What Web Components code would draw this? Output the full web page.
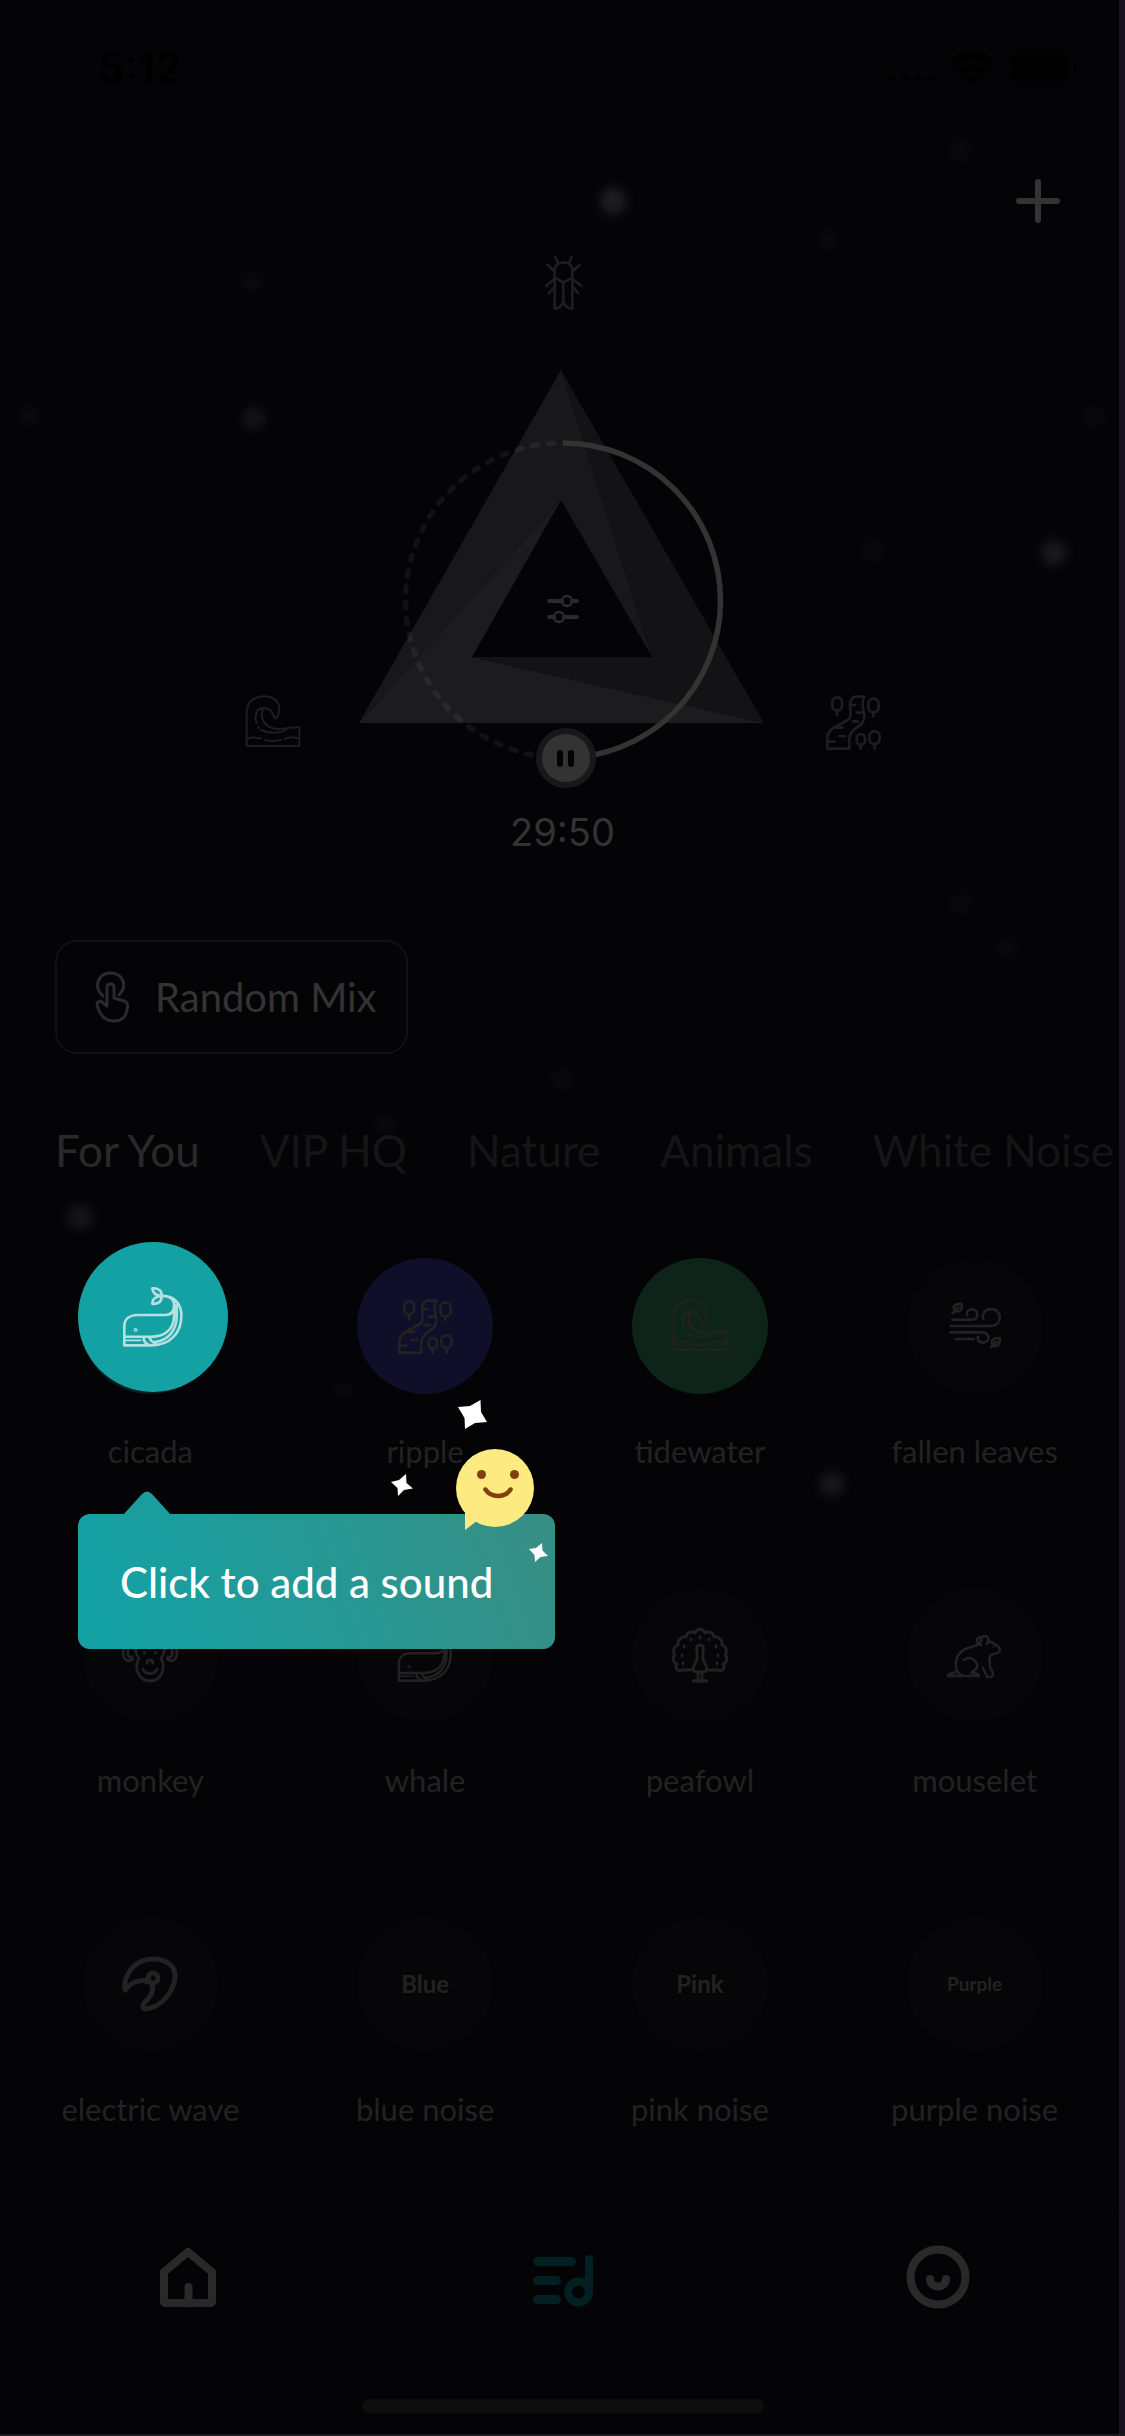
<!DOCTYPE html>
<html lang="en">
<head>
<meta charset="utf-8">
<meta name="viewport" content="width=device-width, initial-scale=1">
<title>Sound Mixer</title>
<style>
  html, body { margin: 0; min-height: 100%; background: #040406; }
  body { font-family: Lato, "Open Sans", sans-serif; color: #333334; }
</style>
</head>
<body>
<mix-app></mix-app>
<script>
const ICONS = {
  plus: ['0 0 44 44', 6, '<path d="M22 3v38M3 22h38"/>'],
  cicada: ['37 39 180 180', 8, '<path d="M102 112V90C102 60 155 60 155 90V112L128 128ZM102 112V206C118 206 128 192 128 180V128M155 112V206C139 206 128 192 128 180M112 69L104 50M145 69L153 50M102 95L80 74M155 95L177 74M100 118L76 138M157 118L182 138M100 142L84 160M158 142L173 160"/>'],
  tide: ['66 66 180 180', 6, '<path d="M77 228V128C77 96 100 79 130 79C160 79 176 98 175 118C174 134 167 146 162 145C156 141 156 115 130 114C108 113 103 132 104 150L107 160M112 170l2 4M130 114C117 126 121 154 140 168C170 187 200 169 235 172V228H77M120 180C140 190 175 192 197 178M77 206c8 0 12-4 20-4s12 4 24 3M133 210c8 0 12 3 22 3s14-3 24-3M190 206c8 0 12-4 20-4s12 3 25 3"/>'],
  ripple: ['69 66 180 180', 8, '<path d="M82 236V205C82 162 152 162 152 136L150 105C150 92 158 80 166 80H193C185 95 188 110 190 122C196 142 193 158 177 168C158 180 148 190 148 208V236ZM152 105h13M170 128h14M158 154h16M101 173h27M118 198h17M84 215h20M111 120v15M220 126v13M182 222v15M224 222v15"/><rect x="97" y="82" width="29" height="39" rx="14"/><rect x="205" y="86" width="31" height="41" rx="15"/><rect x="170" y="192" width="25" height="32" rx="12"/><rect x="208" y="184" width="31" height="38" rx="15"/>'],
  whale: ['180 200 200 200', 8, '<path d="M193 384V328C193 306 210 294 235 294H318C336 294 344 282 344 264C344 246 332 236 309 236C350 236 366 266 366 296C366 350 330 385 276 386H193M193 360H252C250 376 262 385 276 386M254 360H268C272 370 276 378 288 379M268 360C316 362 344 338 344 294V262M284 376C326 372 352 340 352 296V262"/><path d="M197 371H243" stroke-width="5"/><path d="M278 213C298 212 308 222 306 235C290 236 280 228 278 213ZM278 260C278 245 290 237 306 237C308 253 296 261 278 260Z"/><circle cx="227" cy="339" r="2"/>'],
  wind: ['1028 228 180 180', 8, '<path d="M1050 299H1110C1131 299 1130 268 1108 268C1095 268 1090 278 1095 286M1045 318H1165C1201 318 1202 267 1165 267C1147 267 1138 284 1143 297M1045 337h22M1073 337H1140C1165 337 1163 368 1142 368C1130 368 1124 358 1127 350M1061 357h14M1083 357h31M1051 280L1058 272C1048 258 1060 250 1078 252C1081 270 1070 279 1058 272L1068 262M1166 382L1172 376C1163 362 1174 352 1192 355C1195 372 1184 382 1172 376L1182 366"/>'],
  monkey: ['0 0 60 60', 2.8, '<path d="M13 34C6 39 1 32 4 23C7 15 13 17 14 21M47 34C54 39 59 32 56 23C53 15 47 17 46 21M12 32C8 33 7 29 8 25M48 32C52 33 53 29 52 25M14 24C14 0 46 0 46 24M19 33C12 24 18 17 24 20C28 22 28 23 30 23C32 23 32 22 36 20C42 17 48 24 41 33M19 33C13 45 20 56 30 56C40 56 47 45 41 33M23 44C25 50 35 50 37 44M27 38C27 34 33 34 33 38M24 28h1M35 28h1"/>'],
  peafowl: ['0 0 60 60', 2.8, '<path d="M23 45H12C7 47 4 42 7 39C2 37 2 32 5 30C2 26 4 21 8 20C7 15 12 11 16 12C17 7 22 6 25 8C27 3 33 3 35 8C38 6 43 7 44 12C48 11 53 15 52 20C56 21 58 26 55 30C58 32 58 37 53 39C56 42 53 47 48 45H37M30 20C33 20 34 23 33 27V34C34 38 37 40 37 45C34 48 26 48 23 45C23 40 26 38 27 34V27C26 23 27 20 30 20ZM28 47v8M32 47v8M23 56h14"/><path d="M30 12v1M21 14v1M39 14v1M14 21v1M46 21v1M12 30v1M48 30v1M13 38v1M47 38v1"/>'],
  mouse: ['0 0 60 60', 2.5, '<path d="M34 51H15M20 51C8 50 9 33 16 27C22 21 29 23 34 19C38 16 35 13 37 12C43 9 45 15 42 19M36 20C31 19 31 13 35 12M43 16C49 17 55 22 55 25C54 29 48 29 46 30C43 33 45 37 45 43C47 45 50 51 46 52H42L38 43M19 35C25 30 33 36 32 42C31 46 26 47 26 48C28 48 34 48 34 51M12 45C12 49 3 47 3 51H17"/><circle cx="49" cy="21" r=".4"/>'],
  swirl: ['0 0 60 60', 5, '<path d="M5 36C3 22 14 5 33 5C48 5 56 13 55 24C53 39 41 53 26 55C22 55 22 51 25 48C31 42 34 37 32 30C29 25 14 24 5 36ZM27 28L29 21"/><circle cx="33" cy="24" r="5"/>'],
  tap: ['0 0 34 52', 3, '<path d="M8 25C-2 16 3 2 15.500 2C28 2 33 15 24 24M12 35V16C12 12 19 12 19 16V27L29 30C33 31 33 35 32 39C31 46 26 50 19 50C9 50 4 42 2 34C2 30 6 29 8 32L12 35Z"/>'],
  sliders: ['0 0 40 40', 4, '<path d="M6 12h13M29 12h5M6 28h5M21 28h13"/><g stroke-width="2.500"><circle cx="24" cy="12" r="5"/><circle cx="16" cy="28" r="5"/></g>'],
  home: ['0 0 64 64', 8, '<path d="M8 56V27L32 7L56 27V56Q56 58 53 58H11Q8 58 8 56Z"/><path d="M32.500 42v14"/>'],
  music: ['0 0 64 64', 9, '<path d="M6.500 16.500h34M6.500 35.500h19M6.500 54.500h19"/><path d="M58 14V45" stroke-width="8"/><circle cx="47.500" cy="47" r="10.500" stroke-width="8"/>'],
  face: ['0 0 64 64', 8, '<circle cx="32" cy="32" r="27.500"/><path d="M24 34C24 44 40 44 40 34"/>'],
  signal: ['0 0 190 34', 0, '<g fill="currentColor"><circle cx="4" cy="27" r="3.500"/><circle cx="17" cy="27" r="3.500"/><circle cx="30" cy="27" r="3.500"/><circle cx="43" cy="27" r="3.500"/><path d="M62 10C75-2 93-2 106 10L101 16C91 7 77 7 67 16ZM70 19C79 11 89 11 98 19L93 24C87 19 81 19 75 24ZM78 27C82 23 86 23 90 27L84 33Z"/><rect x="123" y="4" width="56" height="26" rx="7"/><path d="M186 12q4 5 0 10z"/></g><rect x="120" y="1" width="62" height="32" rx="10" stroke="#020203" stroke-width="2"/>']
};

class Base extends HTMLElement {
  connectedCallback() {
    if (!this.shadowRoot) this.attachShadow({ mode: 'open' }).innerHTML = this.view();
  }
}

class MixIcon extends Base {
  view() {
    const [box, width, art] = ICONS[this.getAttribute('name')];
    return `<style>:host{display:block;width:60px;height:60px;flex:none}svg{display:block;width:100%;height:100%}</style>
      <svg viewBox="${box}" fill="none" stroke="currentColor" stroke-width="${width}" stroke-linecap="round" stroke-linejoin="round" aria-hidden="true">${art}</svg>`;
  }
}

class GlowField extends Base {
  view() {
    const glows = [[613,201,23,.11],[254,418,20,.06],[1054,553,22,.09],[80,1217,22,.07],[832,1484,22,.08],
      [961,150,18,.022],[828,239,18,.02],[252,283,18,.022],[29,415,18,.025],[1094,417,18,.022],[873,550,18,.025],
      [961,903,18,.022],[1006,948,18,.022],[562,1079,18,.022],[385,1124,18,.022],[343,1390,16,.02]];
    return `<style>:host{position:absolute;inset:0;pointer-events:none;overflow:hidden}svg{display:block;width:100%}</style>
      <svg viewBox="0 0 1125 2436" aria-hidden="true"><defs><radialGradient id="g"><stop offset="0" stop-color="#fff"/><stop offset=".35" stop-color="#fff" stop-opacity=".75"/><stop offset=".7" stop-color="#fff" stop-opacity=".2"/><stop offset="1" stop-color="#fff" stop-opacity="0"/></radialGradient></defs>
      ${glows.map(([x, y, r, o]) => `<circle cx="${x}" cy="${y}" r="${r}" fill="url(#g)" opacity="${o}"/>`).join('')}</svg>`;
  }
}

class StatusBar extends Base {
  view() {
    return `<style>:host{display:flex;justify-content:space-between;align-items:center;height:136px;padding:0 47px 0 98px;color:#000;font:600 42px/48px Inter,sans-serif}
      mix-icon{width:190px;height:34px}</style><span>5:12</span><mix-icon name="signal"></mix-icon>`;
  }
}

class MixStage extends Base {
  view() {
    return `<style>
      :host{display:flex;flex-direction:column;align-items:center}
      button{border:0;background:none;padding:0;color:inherit;display:block}
      .add{align-self:flex-end;padding:20px;margin:23px 45px 10px 0;color:#333334}
      .add mix-icon{width:44px;height:44px}
      .source{color:#1e1e1f}
      .row{display:flex;align-items:flex-end;justify-content:center;gap:40px;margin-top:57px}
      .row > .source{margin-bottom:38px}
      .dial{position:relative;width:440px;height:420px}
      .dial svg{display:block;width:100%;height:100%}
      .levels{position:absolute;left:200px;top:219px;color:#2b2b2c}
      .levels mix-icon{width:40px;height:40px}
      .pause{position:absolute;left:193px;top:358px;width:60px;height:60px;border-radius:50%;background:#333334;border:6px solid #18181a;display:flex;align-items:center;justify-content:center;gap:5px}
      .pause i{width:6px;height:17px;border-radius:3px;background:#020203}
      time{margin-top:18px;font:400 38px/48px Inter,sans-serif;color:#333334}
    </style>
    <button class="add" aria-label="Add mix"><mix-icon name="plus"></mix-icon></button>
    <button class="source" aria-label="cicada"><mix-icon name="cicada"></mix-icon></button>
    <div class="row">
      <button class="source" aria-label="tidewater"><mix-icon name="tide"></mix-icon></button>
      <div class="dial">
        <svg viewBox="0 0 440 420" aria-hidden="true">
          <path fill="#18181a" d="M218 0L16 353L218 130L309 287Z"/>
          <path fill="#1c1c1e" d="M16 353L218 130L129 287L421 353Z"/>
          <path fill="#131315" d="M218 0L309 287H129L421 353Z"/>
          <g fill="none" stroke="#fff" stroke-linecap="round">
            <path d="M220 388A157.500 157.500 0 0 1 220 73" stroke-width="5.500" stroke-dasharray="5 11" opacity=".06"/>
            <path d="M220 73A157.500 157.500 0 0 1 220 388" stroke="#333334" stroke-width="5.500" stroke-linecap="butt"/>
          </g>
        </svg>
        <button class="levels" aria-label="Volume levels"><mix-icon name="sliders"></mix-icon></button>
        <button class="pause" aria-label="Pause"><i></i><i></i></button>
      </div>
      <button class="source" aria-label="ripple"><mix-icon name="ripple"></mix-icon></button>
    </div>
    <time>29:50</time>`;
  }
}

class RandomMix extends Base {
  view() {
    return `<style>:host{display:flex;padding:84px 55px 0}
      button{box-sizing:border-box;display:flex;align-items:center;gap:26px;height:114px;padding:0 29px 0 38px;border:2px solid #111113;border-radius:22px;background:none;color:#333334;font:400 40px/48px Lato,sans-serif}
      mix-icon{width:34px;height:52px;color:#2b2b2c}</style>
      <button><mix-icon name="tap"></mix-icon><slot></slot></button>`;
  }
}

class CategoryTabs extends Base {
  view() {
    return `<style>:host{display:block;overflow:hidden}
      nav{display:flex;gap:60px;padding:68px 0 0 55px;white-space:nowrap}
      button{border:0;background:none;padding:0;color:#151517;font:400 44px/56px Lato,sans-serif}
      button[aria-current]{color:#29292a}</style>
      <nav>${this.getAttribute('items').split(',').map((t, i) => `<button${i ? '' : ' aria-current="true"'}>${t}</button>`).join('')}</nav>`;
  }
}

class SoundTile extends Base {
  view() {
    const icon = this.getAttribute('icon');
    const word = this.getAttribute('word');
    return `<style>:host{display:block}
      button{display:flex;flex-direction:column;align-items:center;gap:37px;width:100%;border:0;background:none;padding:0;color:#222223;font:400 31px/40px Lato,sans-serif}
      .disc{display:flex;align-items:center;justify-content:center;width:136px;height:136px;border-radius:50%;background:var(--disc,#060608)}
      b{font:700 24px/32px Lato,sans-serif}b.long{font-size:19px}</style>
      <button><span class="disc">${icon ? `<mix-icon name="${icon}"></mix-icon>` : `<b class="${word.length > 4 ? 'long' : ''}">${word}</b>`}</span><slot></slot></button>`;
  }
}

class SoundGuide extends Base {
  view() {
    return `<style>
      :host{position:absolute;left:65px;top:-16px;width:477px}
      .spot{display:flex;align-items:center;justify-content:center;width:150px;height:150px;border:0;border-radius:50%;padding:0;background:#14a1a4;color:#b5e0e1}
      .spot mix-icon{width:66px;height:66px}
      .tip{position:relative;margin-top:122px;height:135px;box-sizing:border-box;padding:0 42px;border-radius:12px;background:linear-gradient(70deg,#14a1a4 8%,#388e83);display:flex;align-items:center;color:#fff;font:500 42px/48px Lato,sans-serif;white-space:nowrap}
      .arrow{position:absolute;left:45px;top:-24px;width:48px;height:25px}
      .fun{position:absolute;left:310px;top:-114px;width:167px;height:164px}
    </style>
    <button class="spot" aria-label="cicada"><mix-icon name="whale"></mix-icon></button>
    <div class="tip" role="tooltip">
      <svg class="arrow" viewBox="0 0 48 25" aria-hidden="true"><path fill="#1c9d9d" d="M0 25L19 4Q24-1 29 4L48 25Z"/></svg>
      <slot></slot>
      <svg class="fun" viewBox="0 0 167 164" aria-hidden="true">
        <path fill="#fdea80" d="M77 108V130L89 121L100 110Z"/><circle cx="107" cy="88" r="39" fill="#fdea80"/>
        <g fill="#80400f"><circle cx="93.500" cy="74.500" r="4.500"/><circle cx="126.500" cy="74.500" r="4.500"/></g>
        <path d="M97.500 89.500C103 98 117 98 122.500 89.500" fill="none" stroke="#80400f" stroke-width="4.500" stroke-linecap="round"/>
        <g fill="#fff"><path d="M70 7L82 6L92.500 0L93 12L99 22L87 23L77 29L76.500 18Z"/>
        <path d="M3 82L11 80L18 74L18.500 83L25 88.500L16 90L10 96L9.500 88Z"/>
        <path d="M141 149L148 148L154 143L154.500 150.500L160 156L152.500 157L147 162L146.500 155Z"/></g>
      </svg>
    </div>`;
  }
}

class SoundGrid extends Base {
  view() {
    return `<style>:host{display:block;padding:80px 13px}
      .wrap{position:relative}.grid{display:grid;grid-template-columns:repeat(4,1fr);row-gap:116px}</style>
      <div class="wrap"><div class="grid"><slot></slot></div><slot name="guide"></slot></div>`;
  }
}

class TabBar extends Base {
  view() {
    return `<style>:host{display:block;margin-top:auto;border-top:2px solid #070709;height:222px}
      nav{display:grid;grid-template-columns:repeat(3,1fr);padding-top:33px}
      a{justify-self:center;color:#29292a}a[aria-current]{color:#022021}
      mix-icon{width:64px;height:64px}
      .bar{width:402px;height:14px;border-radius:7px;background:#0e0e0f;margin:90px auto 0}</style>
      <nav><a href="#home" aria-label="Home"><mix-icon name="home"></mix-icon></a>
      <a href="#mix" aria-label="Mix" aria-current="page"><mix-icon name="music"></mix-icon></a>
      <a href="#me" aria-label="Profile"><mix-icon name="face"></mix-icon></a></nav><div class="bar"></div>`;
  }
}

class MixApp extends Base {
  view() {
    return `<style>
      :host{position:relative;display:flex;flex-direction:column;min-height:100vh;box-sizing:border-box;overflow:hidden;border-bottom:2px solid #1b1b1e}
      .edge{position:absolute;top:0;right:0;bottom:0;width:6px;background:#17141f}
      .blue{--disc:#0f0f2a}.green{--disc:#0e2419}.teal{--disc:#042021}
    </style>
    <glow-field></glow-field>
    <status-bar></status-bar>
    <mix-stage></mix-stage>
    <random-mix>Random Mix</random-mix>
    <category-tabs items="For You,VIP HQ,Nature,Animals,White Noise"></category-tabs>
    <sound-grid>
      <sound-tile icon="cicada" class="teal">cicada</sound-tile>
      <sound-tile icon="ripple" class="blue">ripple</sound-tile>
      <sound-tile icon="tide" class="green">tidewater</sound-tile>
      <sound-tile icon="wind">fallen leaves</sound-tile>
      <sound-tile icon="monkey">monkey</sound-tile>
      <sound-tile icon="whale">whale</sound-tile>
      <sound-tile icon="peafowl">peafowl</sound-tile>
      <sound-tile icon="mouse">mouselet</sound-tile>
      <sound-tile icon="swirl">electric wave</sound-tile>
      <sound-tile word="Blue">blue noise</sound-tile>
      <sound-tile word="Pink">pink noise</sound-tile>
      <sound-tile word="Purple">purple noise</sound-tile>
      <sound-guide slot="guide">Click to add a sound</sound-guide>
    </sound-grid>
    <tab-bar></tab-bar>
    <div class="edge"></div>`;
  }
}

for (const [tag, type] of Object.entries({
  'mix-icon': MixIcon, 'glow-field': GlowField, 'status-bar': StatusBar, 'mix-stage': MixStage,
  'random-mix': RandomMix, 'category-tabs': CategoryTabs, 'sound-tile': SoundTile,
  'sound-guide': SoundGuide, 'sound-grid': SoundGrid, 'tab-bar': TabBar, 'mix-app': MixApp
})) customElements.define(tag, type);
</script>
</body>
</html>
